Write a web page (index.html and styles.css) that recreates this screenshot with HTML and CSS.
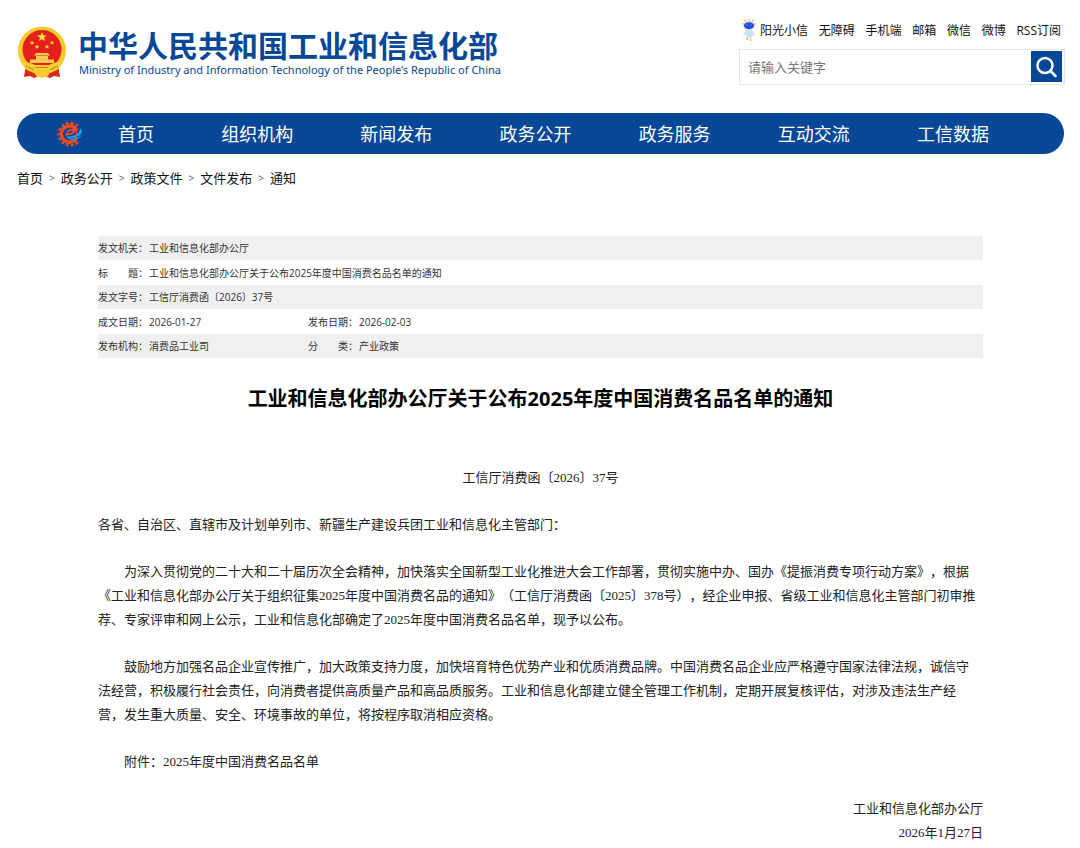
FILE: index.html
```
<!DOCTYPE html>
<html lang="zh-CN">
<head>
<meta charset="utf-8">
<meta name="viewport" content="width=device-width, initial-scale=1">
<title>工业和信息化部办公厅关于公布2025年度中国消费名品名单的通知</title>
<link rel="stylesheet" href="styles.css">
</head>
<body>
<div class="page">
  <header class="header">
    <a class="brand" href="#">
      <svg class="emblem" viewBox="0 0 50 54" aria-hidden="true">
        <path d="M9 38 7 51l6-1 4 2 5-2h6l5 2 4-2 6 1-2-13z" fill="#d9281c"/>
        <circle cx="25" cy="24.500" r="24" fill="#f6c92c"/>
        <circle cx="25" cy="23.500" r="19.500" fill="#e3201b"/>
        <path d="m25 6 1.300 3.300 3.500.2-2.700 2.200.9 3.400-3-1.900-3 1.900.9-3.400-2.700-2.200 3.500-.2z" fill="#ffd93b"/>
        <g fill="#ffd93b"><path id="s" d="m15 14.500.7 1.500 1.600.1-1.200 1 .4 1.600-1.500-.9-1.500.9.4-1.600-1.200-1 1.600-.1z"/><use href="#s" x="20"/><use href="#s" x="5" y="4"/><use href="#s" x="15" y="4"/></g>
        <path d="M19 27h12l2 2.500H17zM19 30h12v4H19zM13 33.500h24V37H13z" fill="#f5cb50"/>
        <path d="M5 36c6 0 9 1 13 3h14c4-2 7-3 13-3-1 6-5 9-11 10l-5-2h-8l-5 2C10 45 6 42 5 36z" fill="#f9d232"/>
        <path d="m9 40 8 4M41 40l-8 4M19 41.500h12" fill="none" stroke="#e3721c" stroke-width="1"/>
        <path d="M17 46c3-3 13-3 16 0l-2 4-6 2-6-2z" fill="#f9cd32"/>
      </svg>
      <span class="brand-text">
        <span class="brand-cn">中华人民共和国工业和信息化部</span>
        <span class="brand-en">Ministry of Industry and Information Technology of the People’s Republic of China</span>
      </span>
    </a>
    <div class="tools">
      <nav class="quick" aria-label="快捷链接">
        <a class="assistant" href="#">
          <svg class="robot" viewBox="0 0 14 22" aria-hidden="true">
            <path d="M7 0v1.500M2.500 1l.9 1.200M11.500 1l-.9 1.200M0 5h1.500M12.500 5H14" stroke="#f4bd2b" stroke-width="1.600"/>
            <ellipse cx="7" cy="6.500" rx="5.800" ry="4.700" fill="#cfdcf6"/>
            <ellipse cx="7" cy="6.600" rx="5" ry="3.300" fill="#2749d5"/>
            <path d="M4.500 6h1M8.500 6h1" stroke="#79caff"/>
            <path d="M4 11h6l3 5-2 1-1-2-.5 4-1.500 2-1-3-1 3-1.500-2L4 15l-2 2-1-1z" fill="#cfe0f4"/>
            <path d="M5 19.500v1.500M8.500 20v2" stroke="#f4bd2b" stroke-width="1.500"/>
          </svg>阳光小信</a>
        <a href="#">无障碍</a><a href="#">手机端</a><a href="#">邮箱</a><a href="#">微信</a><a href="#">微博</a><a href="#">RSS订阅</a>
      </nav>
      <form class="search">
        <input class="search-input" type="text" placeholder="请输入关键字" aria-label="请输入关键字">
        <button class="search-button" type="button" aria-label="搜索">
          <svg viewBox="0 0 31 31" aria-hidden="true"><circle cx="14" cy="14.500" r="7.500"/><path d="m19.500 20 5 5"/></svg>
        </button>
      </form>
    </div>
  </header>

  <nav class="main-nav" aria-label="主导航">
    <svg class="nav-logo" viewBox="0 0 26 26" aria-hidden="true">
      <path d="M20.500 5A11 11 0 1 0 22 19.500" fill="none" stroke="#f04a1d" stroke-width="3" stroke-dasharray="2.600 2.200"/>
      <circle cx="12.500" cy="13" r="8.200" fill="none" stroke="#f04a1d" stroke-width="3.400"/>
      <path d="M20 9h6v9h-6z" fill="#064896"/>
      <path d="M8.500 14.500C9 9.500 14 6.500 17.500 8c3 2.500-1 6-9 6.500zm2.300-2c3 0 5.200-1.500 4.700-2.700-1.500-.8-3.700.7-4.700 2.700z" fill="#f04a1d" fill-rule="evenodd"/>
      <path d="M9 15.500C17 16 24 12 23 7c5 3 0 10.500-11 11 6 .2 11-1.500 13.500-5.500C23 19.500 13 21.500 9 15.500z" fill="#2b98dc"/>
    </svg>
    <ul class="nav-list">
      <li><a href="#">首页</a></li><li><a href="#">组织机构</a></li><li><a href="#">新闻发布</a></li><li><a href="#">政务公开</a></li><li><a href="#">政务服务</a></li><li><a href="#">互动交流</a></li><li><a href="#">工信数据</a></li>
    </ul>
  </nav>

  <nav class="crumbs" aria-label="当前位置">
    <a href="#">首页</a><span>&gt;</span><a href="#">政务公开</a><span>&gt;</span><a href="#">政策文件</a><span>&gt;</span><a href="#">文件发布</a><span>&gt;</span><a href="#">通知</a>
  </nav>

  <main class="article">
    <table class="meta">
      <tbody>
        <tr><th scope="row">发文机关：</th><td colspan="3">工业和信息化部办公厅</td></tr>
        <tr><th scope="row">标　　题：</th><td colspan="3">工业和信息化部办公厅关于公布2025年度中国消费名品名单的通知</td></tr>
        <tr><th scope="row">发文字号：</th><td colspan="3">工信厅消费函〔2026〕37号</td></tr>
        <tr><th scope="row">成文日期：</th><td class="meta-first">2026-01-27</td><th scope="row">发布日期：</th><td>2026-02-03</td></tr>
        <tr><th scope="row">发布机构：</th><td class="meta-first">消费品工业司</td><th scope="row">分　　类：</th><td>产业政策</td></tr>
      </tbody>
    </table>
    <h1 class="title">工业和信息化部办公厅关于公布2025年度中国消费名品名单的通知</h1>
    <div class="body">
      <p class="number">工信厅消费函〔2026〕37号</p>
      <p>各省、自治区、直辖市及计划单列市、新疆生产建设兵团工业和信息化主管部门：</p>
      <p class="indent">为深入贯彻党的二十大和二十届历次全会精神，加快落实全国新型工业化推进大会工作部署，贯彻实施中办、国办《提振消费专项行动方案》，根据《工业和信息化部办公厅关于组织征集2025年度中国消费名品的通知》（工信厅消费函〔2025〕378号），经企业申报、省级工业和信息化主管部门初审推<br>荐、专家评审和网上公示，工业和信息化部确定了2025年度中国消费名品名单，现予以公布。</p>
      <p class="indent">鼓励地方加强名品企业宣传推广，加大政策支持力度，加快培育特色优势产业和优质消费品牌。中国消费名品企业应严格遵守国家法律法规，诚信守<br>法经营，积极履行社会责任，向消费者提供高质量产品和高品质服务。工业和信息化部建立健全管理工作机制，定期开展复核评估，对涉及违法生产经<br>营，发生重大质量、安全、环境事故的单位，将按程序取消相应资格。</p>
      <p class="indent"><a href="#">附件：2025年度中国消费名品名单</a></p>
      <p class="signature">工业和信息化部办公厅<br>2026年1月27日</p>
    </div>
  </main>
</div>
</body>
</html>
```
FILE: styles.css
```
* { box-sizing: border-box; }
body {
  margin: 0;
  background: #fff;
  color: #111;
  font-family: "Open Sans", "Noto Sans CJK SC", sans-serif;
  text-spacing-trim: space-all;
}
a { color: inherit; text-decoration: none; }
.page { padding: 19px 16px 0 17px; }

.header { display: flex; justify-content: space-between; height: 94px; }
.brand { display: flex; align-items: flex-start; gap: 11px; padding-top: 7px; color: #064896; }
.emblem { width: 50px; height: 54px; }
.brand-text { display: flex; flex-direction: column; white-space: nowrap; }
.brand-cn { font: 700 30px/36px "Noto Sans CJK SC", sans-serif; }
.brand-en { padding-left: 1px; font: 400 11px/16px "Noto Sans", sans-serif; }

.tools { width: 326px; margin-right: -1px; }
.quick {
  display: flex;
  justify-content: space-between;
  align-items: center;
  height: 22px;
  margin-bottom: 8px;
  padding: 0 4px 0 3px;
  font-size: 12px;
  white-space: nowrap;
}
.assistant { display: flex; align-items: center; gap: 4px; }
.robot { width: 14px; height: 22px; }
.search { display: flex; height: 36px; padding: 1px 2px; border: 1px solid #e6e6e6; }
.search-input {
  flex: 1;
  min-width: 0;
  border: 0;
  outline: 0;
  padding: 0 6px;
  background: none;
  font: 13px/20px "Noto Sans CJK SC", sans-serif;
}
.search-input::placeholder { color: #777; }
.search-button { width: 31px; height: 31px; padding: 0; border: 0; background: #064896; }
.search-button svg { display: block; width: 31px; height: 31px; fill: none; stroke: #fff; stroke-width: 2.5; stroke-linecap: round; }

.main-nav {
  display: flex;
  align-items: center;
  gap: 35px;
  height: 41px;
  padding: 0 75px 0 40px;
  border-radius: 21px;
  background: #064896;
  color: #fff;
}
.nav-logo { width: 26px; height: 26px; }
.nav-list {
  display: flex;
  flex: 1;
  justify-content: space-between;
  margin: 0;
  padding: 0;
  list-style: none;
  font-size: 18px;
  line-height: 40px;
  white-space: nowrap;
}

.crumbs { display: flex; gap: 6px; padding-top: 14px; font-size: 13px; line-height: 20px; }
.crumbs span { color: #33639c; font-size: 10px; }

.article { padding: 48px 81px 0; }
.meta { width: 100%; border-collapse: collapse; color: #333; font-size: 10px; }
.meta tr { height: 25px; }
.meta tr:nth-child(odd) { height: 24px; background: #f0f0f0; }
.meta th, .meta td { padding: 0; text-align: left; font-weight: 400; line-height: 16px; }
.meta th { width: 51px; white-space: nowrap; }
.meta-first { width: 159px; }

.title { margin: 26px 0 0; color: #000; font-size: 20px; line-height: 30px; text-align: center; }
.body { padding-top: 52px; font: 13px/24px "Liberation Serif", "Noto Sans CJK SC", serif; color: #222; }
.body p { margin: 0 0 23px; }
.body .indent { text-indent: 2em; }
.body .number { text-align: center; }
.body .signature { margin-bottom: 0; text-align: right; }
```
